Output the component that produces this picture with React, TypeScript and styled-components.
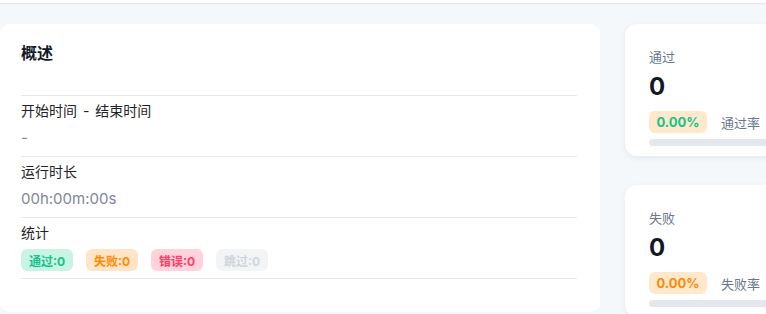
import styled, { createGlobalStyle } from 'styled-components';

const GlobalStyle = createGlobalStyle`
    html, body {
        margin: 0;
        padding: 0;
        background: #ffffff;
        overflow: hidden;
        font-family: "Inter", "Noto Sans CJK SC", sans-serif;
    }
`;

const TopBar = styled.div`
    height: 3px;
    background: #ffffff;
    border-bottom: 1px solid #e4e7ec;
`;

const Main = styled.div`
    background: #f5f8fb;
    padding-top: 20px;
    height: 310px;
    box-sizing: border-box;
    display: grid;
    grid-template-columns: 600px 220px;
    column-gap: 25px;
    align-items: start;
`;

const OverviewCard = styled.section`
    background: #ffffff;
    border-radius: 10px;
    height: 288px;
    padding: 0 23px 0 21px;
    box-sizing: border-box;
`;

const Title = styled.h2`
    margin: 0;
    padding-top: 20px;
    height: 72px;
    box-sizing: border-box;
    font-size: 16px;
    line-height: 18px;
    font-weight: 700;
    color: #111827;
    border-bottom: 1px solid #e6e8ee;
`;

const Row = styled.div`
    padding: 5px 0 7px;
    border-bottom: 1px solid #e6e8ee;
`;

const Label = styled.div`
    font-size: 14px;
    line-height: 20px;
    color: #1f2329;
    word-spacing: 2px;
`;

const Value = styled.div`
    margin-top: 6px;
    font-size: 15px;
    line-height: 22px;
    color: #7d8799;
`;

const Badges = styled.div`
    margin-top: 6px;
    display: flex;
    gap: 13px;
`;

const tones = {
    pass: { bg: '#c9f3e2', fg: '#12c48b' },
    fail: { bg: '#ffe5c8', fg: '#ff8a00' },
    error: { bg: '#ffd2dc', fg: '#ff3b68' },
    skip: { bg: '#f3f4f6', fg: '#d0d5dd' },
};

type Tone = keyof typeof tones;

const Badge = styled.span<{ $tone: Tone }>`
    width: 52px;
    height: 22px;
    border-radius: 6px;
    display: flex;
    align-items: center;
    justify-content: center;
    font-size: 12px;
    font-weight: 700;
    background: ${p => tones[p.$tone].bg};
    color: ${p => tones[p.$tone].fg};
`;

const Side = styled.div`
    display: flex;
    flex-direction: column;
    gap: 29px;
`;

const StatCard = styled.div`
    background: #ffffff;
    border-radius: 12px;
    box-shadow: 0 2px 6px rgba(30, 40, 60, 0.08);
    padding: 24px 24px 10px;
`;

const StatLabel = styled.div`
    font-size: 13px;
    line-height: 18px;
    color: #6b778c;
`;

const StatNumber = styled.div`
    margin-top: 7px;
    font-size: 24px;
    line-height: 28px;
    font-weight: 700;
    color: #111827;
`;

const RateLine = styled.div`
    margin-top: 10px;
    display: flex;
    align-items: center;
    gap: 14px;
`;

const Rate = styled.span<{ $color: string }>`
    width: 58px;
    height: 22px;
    border-radius: 6px;
    background: #ffe8cc;
    color: ${p => p.$color};
    font-size: 13px;
    font-weight: 700;
    display: flex;
    align-items: center;
    justify-content: center;
`;

const RateText = styled.span`
    font-size: 13px;
    color: #6b778c;
`;

const Bar = styled.div`
    margin-top: 6px;
    height: 7px;
    border-radius: 4px;
    background: #e4e7ee;
`;

const stats = [
    { label: '通过', rate: '通过率', color: '#12c48b' },
    { label: '失败', rate: '失败率', color: '#ff8a00' },
];

export default function App() {
    return (
        <>
            <GlobalStyle />
            <TopBar />
            <Main>
                <OverviewCard>
                    <Title>概述</Title>
                    <Row>
                        <Label>开始时间 - 结束时间</Label>
                        <Value>-</Value>
                    </Row>
                    <Row>
                        <Label>运行时长</Label>
                        <Value>00h:00m:00s</Value>
                    </Row>
                    <Row>
                        <Label>统计</Label>
                        <Badges>
                            <Badge $tone="pass">通过:0</Badge>
                            <Badge $tone="fail">失败:0</Badge>
                            <Badge $tone="error">错误:0</Badge>
                            <Badge $tone="skip">跳过:0</Badge>
                        </Badges>
                    </Row>
                </OverviewCard>
                <Side>
                    {stats.map(s => (
                        <StatCard key={s.label}>
                            <StatLabel>{s.label}</StatLabel>
                            <StatNumber>0</StatNumber>
                            <RateLine>
                                <Rate $color={s.color}>0.00%</Rate>
                                <RateText>{s.rate}</RateText>
                            </RateLine>
                            <Bar />
                        </StatCard>
                    ))}
                </Side>
            </Main>
        </>
    );
}
